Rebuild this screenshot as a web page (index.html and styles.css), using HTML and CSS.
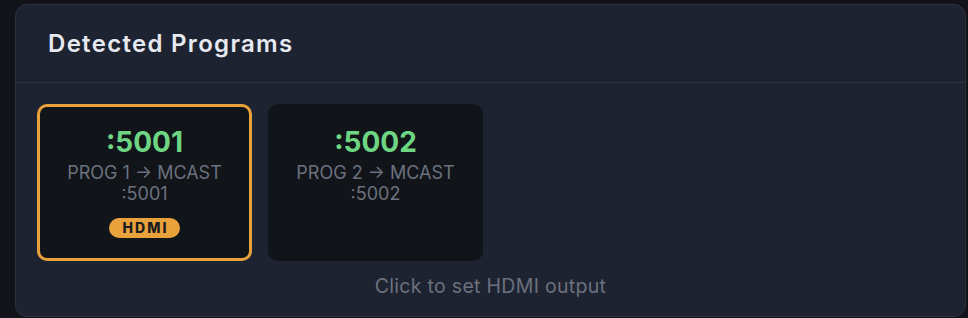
FILE: index.html
```html
<!DOCTYPE html>
<html>
<head>
<meta charset="utf-8">
<link rel="stylesheet" href="styles.css">
</head>
<body>
<section class="panel">
  <header class="panel-header">
    <h2 class="panel-title">Detected Programs</h2>
  </header>
  <div class="panel-body">
    <div class="programs">
      <div class="program selected">
        <div class="port">:5001</div>
        <div class="desc">PROG 1 → MCAST<br>:5001</div>
        <span class="badge">HDMI</span>
      </div>
      <div class="program">
        <div class="port">:5002</div>
        <div class="desc">PROG 2 → MCAST<br>:5002</div>
      </div>
    </div>
    <p class="hint">Click to set HDMI output</p>
  </div>
</section>
</body>
</html>
```
FILE: styles.css
```css
html, body {
  margin: 0;
  padding: 0;
  background: #111318;
  font-family: Inter, "Noto Sans", "Liberation Sans", sans-serif;
}
body {
  padding: 4px 2px 0 15px;
}
.panel {
  box-sizing: border-box;
  height: 313px;
  background: #1e2331;
  border: 1px solid #2b3242;
  border-radius: 12px;
  overflow: hidden;
}
.panel-header {
  height: 78px;
  box-sizing: border-box;
  display: flex;
  align-items: center;
  padding: 0 32px;
  border-bottom: 1px solid #2c3342;
}
.panel-title {
  margin: 0;
  font-size: 24px;
  line-height: 30px;
  font-weight: 600;
  letter-spacing: 1.3px;
  color: #e6e9ef;
}
.panel-body {
  padding: 21px 21px 0 21px;
}
.programs {
  display: grid;
  grid-template-columns: 215px 215px;
  gap: 16px;
}
.program {
  box-sizing: border-box;
  background: #111419;
  border: 3px solid transparent;
  border-radius: 10px;
  padding: 18px 8px 20px;
  display: flex;
  flex-direction: column;
  align-items: center;
  text-align: center;
}
.program.selected {
  border-color: #e9a23b;
}
.port {
  font-size: 28px;
  line-height: 34px;
  font-weight: 700;
  color: #6ed683;
}
.desc {
  margin-top: 3px;
  font-size: 18px;
  line-height: 21px;
  color: #6b717e;
}
.badge {
  margin-top: 14px;
  height: 20px;
  line-height: 20px;
  padding: 0 12px 0 14px;
  border-radius: 10px;
  background: #e9a23b;
  color: #1b1c1f;
  font-size: 14px;
  font-weight: 800;
  letter-spacing: 2px;
}
.hint {
  margin: 12px 0 0;
  text-align: center;
  font-size: 19.5px;
  line-height: 26px;
  letter-spacing: 0.3px;
  color: #6b717e;
}
```
